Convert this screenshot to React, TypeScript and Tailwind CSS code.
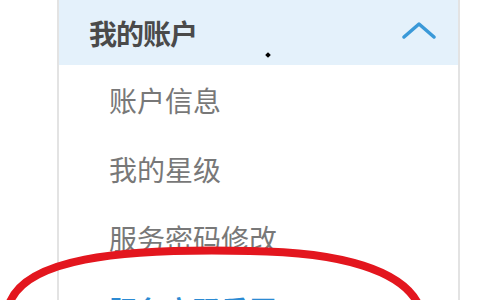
import React from "react";

const items = ["账户信息", "我的星级", "服务密码修改"];

export default function App() {
  return (
    <div
      className="relative w-[480px] h-[300px] overflow-hidden bg-white"
      style={{ fontFamily: '"Noto Sans CJK SC", "Noto Sans", sans-serif' }}
    >
      <div className="ml-[57px] w-[403px] h-[300px] border-l-2 border-r-2 border-[#e3e3e3] flex flex-col">
        <div className="h-[65px] shrink-0 bg-[#e4f1fb] flex items-center justify-between pl-[30px] pr-[22px]">
          <span className="text-[28px] leading-none font-bold text-[#4a4a4a] tracking-[-1px]">我的账户</span>
          <svg width="34" height="20" viewBox="0 0 34 20" className="mt-[-4px]">
            <path d="M2 16 L17 3 L32 16" fill="none" stroke="#3a99d8" strokeWidth="3.5" strokeLinecap="round" strokeLinejoin="round" />
          </svg>
        </div>
        {items.map((t) => (
          <div key={t} className="h-[69px] shrink-0 flex items-center pl-[50px]">
            <span className="text-[28px] leading-none text-[#787878]">{t}</span>
          </div>
        ))}
        <div className="h-[68px] shrink-0 flex items-center pl-[50px] pt-[8px]">
          <span className="text-[28px] leading-none text-[#2b8ad3] font-bold">服务密码重置</span>
        </div>
      </div>
      <div className="absolute left-[266px] top-[53px] w-[4px] h-[4px] rotate-45 bg-black" />
      <svg className="absolute left-0 top-0" width="480" height="300" viewBox="0 0 480 300">
        <path
          d="M8 308 C 20 258, 120 248, 250 251 C 340 252, 405 270, 420 308"
          fill="none"
          stroke="#e3161e"
          strokeWidth="8"
          strokeLinecap="round"
        />
      </svg>
    </div>
  );
}
